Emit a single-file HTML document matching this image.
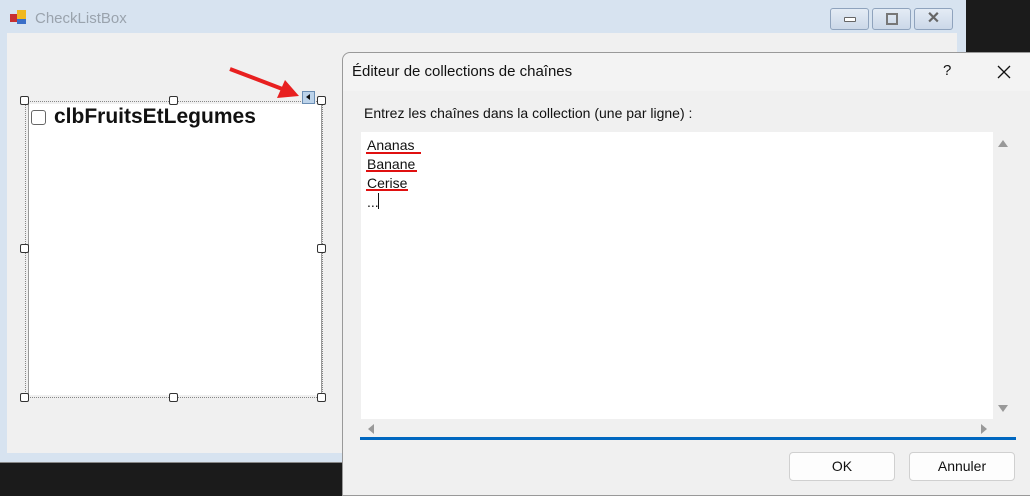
<!DOCTYPE html>
<html><head><meta charset="utf-8"><style>
body{margin:0;width:1030px;height:492px;background:#1b1b1b;position:relative;overflow:hidden;font-family:"Liberation Sans",sans-serif}
.a{position:absolute}
.h{position:absolute;width:7px;height:7px;border:1.5px solid #333;background:#fff;border-radius:2px}
.btn{position:absolute;background:#fdfdfd;border:1px solid #d0d0d0;border-radius:4px;font-size:14px;text-align:center;line-height:27px;color:#111}
.wb{position:absolute;top:8px;width:37px;height:20px;border:1px solid #8fa3bd;border-radius:3px;background:linear-gradient(#e4ecf5,#cbd8e8)}
.u{position:absolute;height:2px;background:#e01010}
</style></head><body>
<div class="a" style="left:0;top:0;width:966px;height:462px;background:#d7e3f0;border-bottom:1px solid #888"></div>
<div class="a" style="left:10px;top:10px;width:16px;height:16px">
 <div class="a" style="left:0;top:4px;width:7px;height:8px;background:#c83030"></div>
 <div class="a" style="left:7px;top:0;width:9px;height:9px;background:#f0b820"></div>
 <div class="a" style="left:7px;top:9px;width:9px;height:5px;background:#3b6fc8"></div></div>
<div class="a" style="left:35px;top:10px;font-size:15px;color:#9aa3ad">CheckListBox</div>
<div class="wb" style="left:830px"><div class="a" style="left:13px;top:8px;width:10px;height:3px;border:1px solid #666;background:#fff;border-radius:1px"></div></div>
<div class="wb" style="left:872px"><div class="a" style="left:13px;top:4px;width:8px;height:8px;border:2px solid #777"></div></div>
<div class="wb" style="left:914px;font-size:16px;font-weight:bold;color:#666;text-align:center;line-height:19px">✕</div>
<div class="a" style="left:7px;top:33px;width:950px;height:420px;background:#f0f0f0"></div>
<div class="a" style="left:25px;top:101px;width:296px;height:295px;border:1px dotted #888"></div>
<div class="a" style="left:28px;top:104px;width:292px;height:291px;background:#fff;border-left:1px solid #999;border-right:1px solid #999"></div>
<div class="a" style="left:31px;top:110px;width:13px;height:13px;border:1.5px solid #666;border-radius:3px;background:#fff"></div>
<div class="a" style="left:54px;top:105px;font-size:21px;font-weight:bold;color:#111">clbFruitsEtLegumes</div>
<div class="h" style="left:20px;top:96px"></div><div class="h" style="left:169px;top:96px"></div><div class="h" style="left:317px;top:96px"></div>
<div class="h" style="left:20px;top:244px"></div><div class="h" style="left:317px;top:244px"></div>
<div class="h" style="left:20px;top:393px"></div><div class="h" style="left:169px;top:393px"></div><div class="h" style="left:317px;top:393px"></div>
<div class="a" style="left:302px;top:91px;width:11px;height:11px;background:#bcd3ea;border:1px solid #6a8db3"><div class="a" style="left:3px;top:2px;border-right:4px solid #111;border-top:3.5px solid transparent;border-bottom:3.5px solid transparent"></div></div>
<svg class="a" style="left:225px;top:62px" width="80" height="40"><line x1="5" y1="7" x2="60" y2="28" stroke="#e82020" stroke-width="4"/><polygon points="74,34 52,36 60,18" fill="#e82020"/></svg>
<div class="a" style="left:342px;top:52px;width:690px;height:442px;background:#f0f0f0;border:1px solid #999;border-radius:8px 0 0 0"></div>
<div class="a" style="left:343px;top:53px;width:688px;height:38px;background:#f3f3f3;border-radius:8px 0 0 0"></div>
<div class="a" style="left:352px;top:63px;font-size:15px;color:#111">Éditeur de collections de chaînes</div>
<div class="a" style="left:943px;top:62px;font-size:15px;color:#111">?</div>
<svg class="a" style="left:996px;top:64px" width="16" height="16"><path d="M2 2L14 14M14 2L2 14" stroke="#111" stroke-width="1.3"/></svg>
<div class="a" style="left:364px;top:105px;font-size:14px;color:#111">Entrez les chaînes dans la collection (une par ligne) :</div>
<div class="a" style="left:360px;top:132px;width:655px;height:306px;background:#f0f0f0"></div>
<div class="a" style="left:361px;top:132px;width:632px;height:287px;background:#fff"></div>
<div class="a" style="left:360px;top:437px;width:656px;height:3px;background:#0067c0"></div>
<div class="a" style="left:367px;top:136px;font-size:14px;line-height:19px;color:#111">Ananas<br>Banane<br>Cerise<br>...</div>
<div class="u" style="left:366px;top:152px;width:55px"></div>
<div class="u" style="left:366px;top:170px;width:51px"></div>
<div class="u" style="left:366px;top:189px;width:42px"></div>
<div class="a" style="left:378px;top:193px;width:1px;height:16px;background:#111"></div>
<div class="a" style="left:998px;top:140px;border-bottom:7px solid #999;border-left:5px solid transparent;border-right:5px solid transparent"></div>
<div class="a" style="left:998px;top:405px;border-top:7px solid #999;border-left:5px solid transparent;border-right:5px solid transparent"></div>
<div class="a" style="left:368px;top:424px;border-right:6px solid #999;border-top:5px solid transparent;border-bottom:5px solid transparent"></div>
<div class="a" style="left:981px;top:424px;border-left:6px solid #999;border-top:5px solid transparent;border-bottom:5px solid transparent"></div>
<div class="btn" style="left:789px;top:452px;width:104px;height:27px">OK</div>
<div class="btn" style="left:909px;top:452px;width:104px;height:27px">Annuler</div>
</body></html>
